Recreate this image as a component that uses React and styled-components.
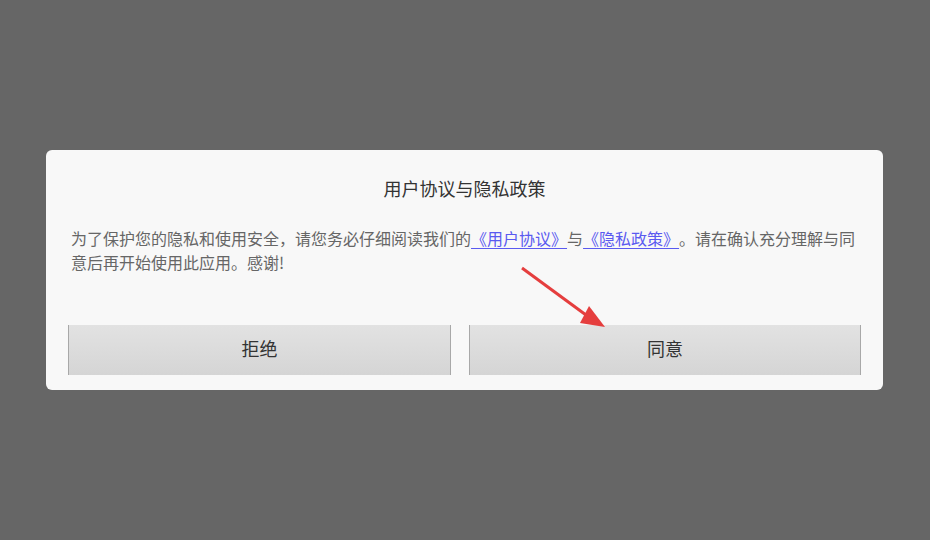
import React from "react";
import styled, { createGlobalStyle } from "styled-components";

const GlobalStyle = createGlobalStyle`
  html, body {
    margin: 0;
    padding: 0;
    background: #666666;
    font-family: "Noto Sans CJK SC", "Noto Sans", sans-serif;
  }
`;

const Overlay = styled.div`
  position: fixed;
  inset: 0;
  background: #666666;
  display: flex;
  align-items: center;
  padding-left: 46px;
`;

const Dialog = styled.div`
  position: relative;
  box-sizing: border-box;
  width: 837px;
  height: 240px;
  padding: 26px 22px 15px;
  background: #f8f8f8;
  border-radius: 6px;
  display: flex;
  flex-direction: column;
`;

const Title = styled.h3`
  margin: 0;
  font-size: 18px;
  font-weight: 400;
  line-height: 24px;
  color: #333333;
  text-align: center;
`;

const Body = styled.p`
  margin: 26px 0 0;
  padding: 0 3px;
  font-size: 16px;
  line-height: 24px;
  color: #666666;
  text-spacing-trim: space-all;
  a {
    color: #5a5af0;
    text-decoration: underline;
    text-underline-offset: 3px;
  }
`;

const Buttons = styled.div`
  margin-top: auto;
  display: grid;
  grid-template-columns: 383px 392px;
  column-gap: 18px;
`;

const Button = styled.button`
  height: 50px;
  padding: 0 0 4px;
  border: none;
  border-left: 1px solid #a8a8a8;
  border-right: 1px solid #a8a8a8;
  background: linear-gradient(#e2e2e2, #d5d5d5);
  font-family: inherit;
  font-size: 18px;
  color: #333333;
  cursor: pointer;
`;

const Arrow = styled.svg`
  position: absolute;
  left: 470px;
  top: 110px;
  width: 100px;
  height: 75px;
  pointer-events: none;
`;

export default function App() {
  return (
    <>
      <GlobalStyle />
      <Overlay>
        <Dialog>
          <Title>用户协议与隐私政策</Title>
          <Body>
            为了保护您的隐私和使用安全，请您务必仔细阅读我们的
            <a href="#">《用户协议》</a>与<a href="#">《隐私政策》</a>
            。请在确认充分理解与同意后再开始使用此应用。感谢!
          </Body>
          <Buttons>
            <Button>拒绝</Button>
            <Button>同意</Button>
          </Buttons>
          <Arrow viewBox="0 0 100 75">
            <line x1="6" y1="8" x2="70" y2="55" stroke="#e53e3e" strokeWidth="3" />
            <polygon points="89,67 73,46 64,63" fill="#e53e3e" />
          </Arrow>
        </Dialog>
      </Overlay>
    </>
  );
}
